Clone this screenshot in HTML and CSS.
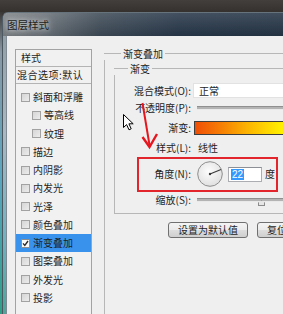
FILE: index.html
```html
<!DOCTYPE html>
<html lang="zh">
<head>
<meta charset="utf-8">
<title>图层样式</title>
<link rel="stylesheet" href="styles.css">
</head>
<body>
<div class="screen">
  <div class="topbar"></div>
  <div class="desk">
    <div class="desk-edge"></div>
    <div class="window">
      <div class="titlebar"><span class="title">图层样式</span></div>
      <div class="client">
        <div class="stylelist">
          <div class="list-head">样式</div>
          <div class="list-blend">混合选项:默认</div>
          <ul class="list-items">
            <li class="item"><span class="cb"></span>斜面和浮雕</li>
            <li class="item sub"><span class="cb"></span>等高线</li>
            <li class="item sub"><span class="cb"></span>纹理</li>
            <li class="item"><span class="cb"></span>描边</li>
            <li class="item"><span class="cb"></span>内阴影</li>
            <li class="item"><span class="cb"></span>内发光</li>
            <li class="item"><span class="cb"></span>光泽</li>
            <li class="item"><span class="cb"></span>颜色叠加</li>
            <li class="item sel"><span class="cb on"><svg viewBox="0 0 7 7" width="7" height="7"><path d="M1 3.4 L2.8 5.4 L6 1" fill="none" stroke="#2b2b2b" stroke-width="1.4"/></svg></span>渐变叠加</li>
            <li class="item"><span class="cb"></span>图案叠加</li>
            <li class="item"><span class="cb"></span>外发光</li>
            <li class="item"><span class="cb"></span>投影</li>
          </ul>
        </div>
        <div class="panel">
          <div class="group outer">
            <div class="group-head"><span class="group-label">渐变叠加</span></div>
            <div class="group-body outer-body">
              <div class="group inner">
                <div class="group-head"><span class="group-label">渐变</span></div>
                <div class="group-body inner-body">
                  <div class="form">
                    <span class="lbl">混合模式(O):</span>
                    <div class="select">正常</div>
                    <span class="lbl">不透明度(P):</span>
                    <div class="slider"><div class="track"></div></div>
                    <span class="lbl">渐变:</span>
                    <div class="gradient"></div>
                    <span class="lbl">样式(L):</span>
                    <div class="plain">线性</div>
                    <span class="lbl">角度(N):</span>
                    <div class="angle">
                      <svg class="dial" viewBox="0 0 26 26" width="26" height="26">
                        <defs>
                          <radialGradient id="dg" cx="0.45" cy="0.4" r="0.65">
                            <stop offset="0" stop-color="#fdfdfd"/>
                            <stop offset="1" stop-color="#dedede"/>
                          </radialGradient>
                        </defs>
                        <circle cx="13" cy="13" r="12.3" fill="url(#dg)" stroke="#8e8e8e" stroke-width="1"/>
                        <line x1="13" y1="13" x2="24" y2="8.6" stroke="#3a3a3a" stroke-width="1.1"/>
                        <circle cx="13" cy="13" r="1.2" fill="#3a3a3a"/>
                      </svg>
                      <div class="num"><span class="hl">22</span></div>
                      <span class="unit">度</span>
                    </div>
                    <span class="lbl">缩放(S):</span>
                    <div class="slider"><div class="track"></div><div class="thumb"></div></div>
                  </div>
                </div>
              </div>
              <div class="buttons">
                <div class="btn wide">设置为默认值</div>
                <div class="btn narrow">复位</div>
              </div>
            </div>
          </div>
        </div>
      </div>
    </div>
  </div>
  <div class="redbox"></div>
  <svg class="arrow" viewBox="0 0 283 314" width="283" height="314">
    <line x1="142.5" y1="103" x2="149.5" y2="145" stroke="#e5161e" stroke-width="2"/>
    <polyline points="142.5,137 149.5,147 157,134" fill="none" stroke="#e5161e" stroke-width="2.4" stroke-linejoin="miter"/>
  </svg>
  <svg class="cursor" viewBox="0 0 12 17" width="12" height="17">
    <path d="M0.5 0.5 L0.5 13.5 L3.6 10.6 L6 15.8 L8.2 14.8 L5.9 9.8 L10.2 9.8 Z" fill="#fff" stroke="#000" stroke-width="1" stroke-linejoin="round"/>
  </svg>
</div>
</body>
</html>
```

FILE: styles.css
```css
* { box-sizing: border-box; }
html, body { margin: 0; padding: 0; }
body {
  width: 283px;
  height: 314px;
  overflow: hidden;
  background: #3a3836;
  font-family: "Liberation Sans", "Noto Sans CJK SC", sans-serif;
  font-size: 10px;
  color: #1e1e1e;
}
.screen {
  position: relative;
  width: 283px;
  height: 314px;
  display: flex;
  flex-direction: column;
  overflow: hidden;
}
.topbar {
  height: 12px;
  flex: none;
  background: linear-gradient(#423f3c, #34312e);
}
.desk {
  flex: 1;
  display: flex;
  min-height: 0;
}
.desk-edge {
  width: 2px;
  flex: none;
  background: linear-gradient(#3a3836 0, #8a98a4 40px, #5aa6c0 55%, #2f9f88 100%);
}
.window {
  flex: none;
  width: 320px;
  display: flex;
  flex-direction: column;
  border-left: 1px solid #4b5862;
  border-top: 1px solid #66727c;
  border-top-left-radius: 6px;
  background: linear-gradient(#8f9aa2 0, #a9b8c2 40%, #6fb2c0 75%, #4aa79a 100%);
  padding-left: 3px;
}
.titlebar {
  height: 23px;
  flex: none;
  margin-left: -3px;
  padding-left: 4px;
  display: flex;
  align-items: center;
  background:
    linear-gradient(rgba(255,255,255,0.12), rgba(0,0,0,0.08)),
    linear-gradient(90deg, #7d8286 0%, #6c737a 12%, #3f4c58 30%, #28384a 55%, #243444 100%);
  border-top-left-radius: 5px;
}
.title {
  font-family: "Noto Sans CJK SC", sans-serif;
  font-size: 10.5px;
  line-height: 12px;
  color: #1d1f21;
  text-shadow: 0 0 4px #d8dcde, 0 0 8px #c2c6c8;
}
.client {
  flex: 1;
  display: flex;
  align-items: flex-start;
  background: #efefef;
  border-left: 1px solid #7f8a92;
  padding: 11px 0 0 8px;
}
.stylelist {
  flex: none;
  width: 77px;
  margin-top: 2px;
  height: 300px;
  border: 1px solid #a3a3a3;
  background: #f1f1f1;
  font-family: "Noto Sans CJK SC", sans-serif;
}
.list-head {
  height: 17px;
  line-height: 16px;
  padding-left: 5px;
  border-bottom: 1px solid #b4b4b4;
}
.list-blend {
  height: 17px;
  line-height: 16px;
  padding-left: 1px;
  border-bottom: 1px solid #b4b4b4;
  white-space: nowrap;
  overflow: hidden;
  letter-spacing: 0.5px;
}
.list-items {
  list-style: none;
  margin: 0;
  padding: 4px 0 0 0;
}
.item {
  height: 18.25px;
  display: flex;
  align-items: center;
  padding-left: 5px;
  line-height: 12px;
  white-space: nowrap;
}
.item.sub { padding-left: 16px; }
.item.sel { background: #3993ec; }
.cb {
  width: 9px;
  height: 9px;
  flex: none;
  margin-right: 3px;
  border: 1px solid #a2a2a2;
  background: linear-gradient(135deg, #d6d6d6, #ececec);
  display: flex;
  align-items: center;
  justify-content: center;
}
.cb.on {
  background: #fbfbfb;
  border-color: #8e8e8e;
}
.cb svg { display: block; }
.panel {
  flex: none;
  width: 200px;
  margin-left: 12px;
  align-self: stretch;
  display: flex;
  flex-direction: column;
}
.group { display: flex; flex-direction: column; }
.outer { flex: 1; }
.group-head {
  height: 13px;
  display: flex;
  align-items: center;
  font-family: "Noto Sans CJK SC", sans-serif;
  line-height: 13px;
}
.group-head::before,
.group-head::after {
  content: "";
  height: 1px;
  background: #b7b7b7;
}
.outer > .group-head::before { width: 17px; }
.inner > .group-head::before { width: 14px; }
.group-head::after { flex: 1; }
.group-label { padding: 0 2px; white-space: nowrap; }
.outer-body {
  flex: 1;
  border-left: 1px solid #b7b7b7;
  display: flex;
  flex-direction: column;
}
.inner {
  margin: 2px 0 0 9px;
}
.inner-body {
  border-left: 1px solid #b7b7b7;
  border-bottom: 1px solid #b7b7b7;
  padding: 7px 0 3px 0;
}
.form {
  display: grid;
  grid-template-columns: 76px 1fr;
  grid-template-rows: 17px 18px 21px 20px 32px 20px;
  column-gap: 2px;
  align-items: center;
  font-family: "Noto Sans CJK SC", sans-serif;
}
.lbl {
  text-align: right;
  white-space: nowrap;
  line-height: 12px;
}
.select {
  height: 15px;
  background: #ffffff;
  border: 1px solid #e2e2e2;
  padding-left: 5px;
  line-height: 13px;
}
.slider {
  position: relative;
  margin-left: 4px;
  height: 4px;
}
.track {
  height: 4px;
  background: #b3b3b3;
  border-top: 1px solid #8f8f8f;
  border-bottom: 1px solid #e9e9e9;
}
.thumb {
  position: absolute;
  left: 61px;
  top: 2px;
  width: 7px;
  height: 6px;
  background: #e6e6e6;
  border: 1px solid #8c8c8c;
  clip-path: polygon(50% 0, 100% 45%, 100% 100%, 0 100%, 0 45%);
}
.gradient {
  margin-left: 1px;
  height: 14px;
  border: 1px solid #3d3d3d;
  background: linear-gradient(90deg, #ef4f06 0%, #f57a04 22%, #fbb301 48%, #ffe600 75%, #ffff00 88%, #ffff00 100%);
}
.plain {
  padding-left: 5px;
  line-height: 12px;
}
.angle {
  display: flex;
  align-items: center;
  padding-left: 4px;
}
.dial { display: block; flex: none; }
.num {
  width: 34px;
  height: 15px;
  margin-left: 5px;
  background: #fff;
  border: 1px solid #abadb3;
  border-top-color: #8c8f96;
  padding: 1px 0 0 2px;
  font-family: "Liberation Sans", sans-serif;
  font-size: 10px;
  line-height: 11px;
}
.hl {
  display: inline-block;
  background: #3399ff;
  color: #fff;
  padding: 0 1px;
}
.unit {
  margin-left: 3px;
  line-height: 12px;
}
.buttons {
  display: flex;
  margin: 8px 0 0 63px;
  gap: 9px;
}
.btn {
  height: 16px;
  border: 1px solid #707070;
  border-radius: 3px;
  background: linear-gradient(#f4f4f4 0%, #ebebeb 48%, #dddddd 52%, #cfcfcf 100%);
  font-family: "Noto Sans CJK SC", sans-serif;
  text-align: center;
  line-height: 14px;
  white-space: nowrap;
}
.btn.wide { width: 80px; }
.btn.narrow { width: 40px; }
.redbox {
  position: absolute;
  left: 137px;
  top: 157px;
  width: 141px;
  height: 35px;
  border: 2px solid #e2252c;
}
.arrow {
  position: absolute;
  left: 0;
  top: 0;
  pointer-events: none;
}
.cursor {
  position: absolute;
  left: 123px;
  top: 114px;
}
```
